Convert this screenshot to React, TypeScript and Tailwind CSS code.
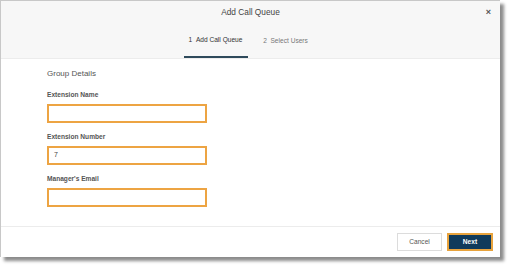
import React from 'react';

function Field({ label, value }: { label: string; value?: string }) {
    return (
        <div className="flex flex-col">
            <label className="h-[8px] text-[6.6px] leading-[8px] font-bold text-[#555]">{label}</label>
            <div className="mt-[5px] mb-[10px] h-[19px] w-[160px] border-2 border-[#eda443] bg-white flex items-center px-[5px] text-[7px] text-[#444]">
                {value}
            </div>
        </div>
    );
}

export default function App() {
    return (
        <div className="w-[511px] h-[268px] bg-white overflow-hidden" style={{ fontFamily: '"Liberation Sans", Arial, sans-serif' }}>
            <div className="w-[500px] h-[257px] flex flex-col bg-white border-l border-t border-[#c8c8c8] shadow-[4px_4px_3px_rgba(0,0,0,0.45)]">
                {/* header */}
                <div className="h-[58px] bg-[#f7f7f7] border-b border-[#ececec] flex flex-col">
                    <div className="relative h-[23px] flex items-center justify-center text-[8.3px] text-[#444]">
                        Add Call Queue
                        <span className="absolute right-[9px] top-[7px] text-[9px] leading-[9px] font-bold text-[#555]">×</span>
                    </div>
                    <div className="flex-1 flex justify-center gap-[10px] pr-[4px]">
                        <div className="w-[64px] flex items-center justify-center border-b-2 border-[#2e4a5b] text-[6.6px] text-[#333]">
                            1&nbsp;&nbsp;Add Call Queue
                        </div>
                        <div className="w-[56px] flex items-center justify-center text-[6.6px] text-[#777]">
                            2&nbsp;&nbsp;Select Users
                        </div>
                    </div>
                </div>

                {/* body */}
                <div className="flex-1 pt-[10px] pl-[46px]">
                    <div className="h-[10px] leading-[10px] text-[8px] text-[#555] mb-[12px]">Group Details</div>
                    <Field label="Extension Name" />
                    <Field label="Extension Number" value="7" />
                    <Field label="Manager's Email" />
                </div>

                {/* footer */}
                <div className="h-[31px] border-t border-[#ececec] flex items-center justify-end gap-[5px] pr-[7px]">
                    <button className="h-[18px] w-[45px] border border-[#dcdcdc] bg-white text-[6.6px] text-[#555]">Cancel</button>
                    <button className="h-[18px] w-[46px] border-2 border-[#e8a33d] bg-[#0f3a5b] text-[6.6px] font-bold text-white">Next</button>
                </div>
            </div>
        </div>
    );
}
